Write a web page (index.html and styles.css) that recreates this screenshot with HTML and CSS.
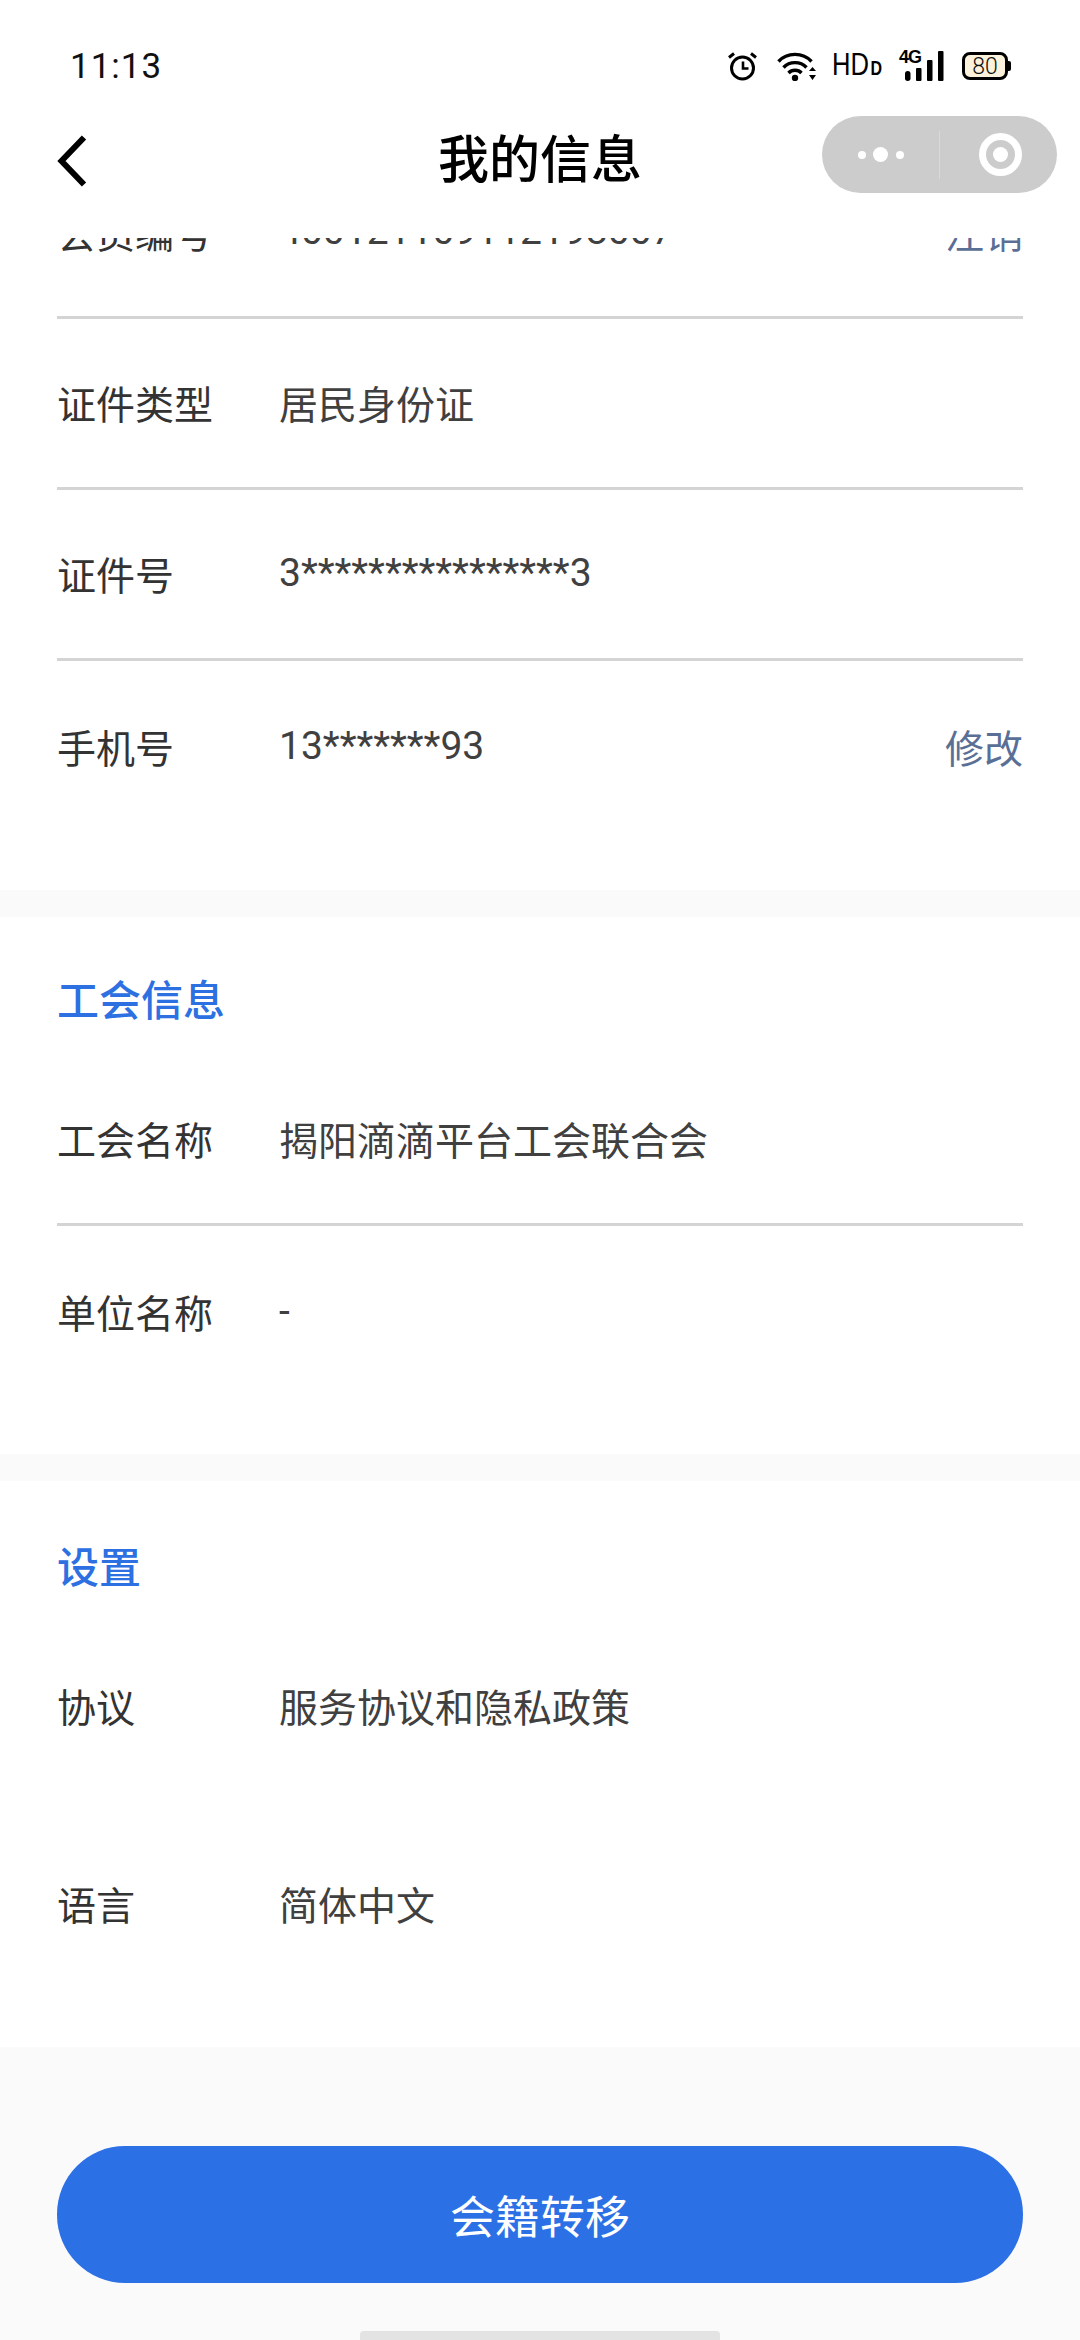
FILE: index.html
```html
<!DOCTYPE html>
<html lang="zh">
<head>
<meta charset="utf-8">
<title>我的信息</title>
<link rel="stylesheet" href="styles.css">
</head>
<body>
<div class="page">
  <header class="top">
    <div class="status">
      <span class="time">11:13</span>
      <div class="status-icons">
        <svg class="i-alarm" viewBox="0 0 29 30" width="29" height="30"><circle cx="14.5" cy="17" r="11" fill="none" stroke="#000" stroke-width="3"/><path d="M15 10.5V17.5H20.5" fill="none" stroke="#000" stroke-width="2.6"/><path d="M1 6.5L6 2.5M28 6.5L23 2.5" stroke="#000" stroke-width="3"/></svg>
        <svg class="i-wifi" viewBox="0 0 39 30" width="39" height="30"><path d="M1.5 10.5C10 1 26 1 34.5 10.5M6.5 16.5C12.5 10 23.5 10 29.5 16.5M11.5 22C15 18.3 21 18.3 24.5 22" fill="none" stroke="#000" stroke-width="3.4"/><circle cx="18" cy="27" r="3.2" fill="#000"/><path d="M32 20l3.5-4 3.5 4zM32 24l3.5 5 3.5-5z" fill="#000"/></svg>
        <span class="hd">HD<small class="hd-small">D</small></span>
        <span class="net">
          <span class="net-4g">4G</span>
          <svg class="net-bars" viewBox="0 0 45 30" width="45" height="30"><rect x="6" y="20" width="5.5" height="10" rx="2.7"/><rect x="17" y="17" width="5.5" height="13" rx="1"/><rect x="28" y="9" width="5.5" height="21" rx="1"/><rect x="39" y="0" width="5.5" height="30" rx="1"/></svg>
        </span>
        <span class="battery"><span class="battery-level">80</span></span>
      </div>
    </div>
    <div class="nav">
      <svg class="back" viewBox="0 0 30 52" width="30" height="52"><path d="M27 2.5L4.5 26L27 49.5" fill="none" stroke="#000" stroke-width="6"/></svg>
      <h1 class="title">我的信息</h1>
      <div class="capsule">
        <div class="capsule-part"><span class="dot"></span><span class="dot dot-big"></span><span class="dot"></span></div>
        <span class="capsule-sep"></span>
        <div class="capsule-part"><span class="target"><span class="target-in"></span></span></div>
      </div>
    </div>
  </header>
  <main class="scroll">
    <div class="content">
      <section class="card card-first">
        <div class="row"><span class="label">会员编号</span><span class="value">400121109112198007</span><span class="action">注销</span></div>
        <div class="row"><span class="label">证件类型</span><span class="value">居民身份证</span></div>
        <div class="row"><span class="label">证件号</span><span class="value">3****************3</span></div>
        <div class="row row-last"><span class="label">手机号</span><span class="value">13*******93</span><span class="action">修改</span></div>
      </section>
      <section class="card">
        <h2 class="heading heading-union">工会信息</h2>
        <div class="row"><span class="label">工会名称</span><span class="value">揭阳滴滴平台工会联合会</span></div>
        <div class="row row-last"><span class="label">单位名称</span><span class="value">-</span></div>
      </section>
      <section class="card card-settings">
        <h2 class="heading heading-settings">设置</h2>
        <div class="row row-plain"><span class="label">协议</span><span class="value">服务协议和隐私政策</span></div>
        <div class="row row-plain"><span class="label">语言</span><span class="value">简体中文</span></div>
      </section>
    </div>
  </main>
  <footer class="foot">
    <button class="cta">会籍转移</button>
    <span class="home"></span>
  </footer>
</div>
</body>
</html>
```
FILE: styles.css
```css
* { box-sizing: border-box; margin: 0; padding: 0; }
html, body { width: 1080px; height: 2340px; overflow: hidden; background: #fff; }
body { font-family: Roboto, "Noto Sans CJK SC", sans-serif; color: #333; }
.page { display: flex; flex-direction: column; height: 2340px; background: #fafafa; }
.top { height: 238px; background: #fff; flex: none; }
.status { height: 116px; padding: 16px 69px 0 70px; display: flex; justify-content: space-between; align-items: center; }
.time { font-family: Roboto, sans-serif; font-size: 35px; color: #111; letter-spacing: 1px; }
.status-icons { display: flex; align-items: center; }
.i-wifi { margin-left: 20px; }
.hd { margin-left: 16px; width: 48px; font-family: "Liberation Sans", sans-serif; font-size: 32px; line-height: 30px; color: #000; white-space: nowrap; transform: scaleX(.8); transform-origin: left center; }
.hd-small { font-size: 20px; font-weight: 700; margin-left: 2px; }
.net { margin-left: 19px; position: relative; display: block; width: 45px; height: 30px; }
.net-bars { display: block; }
.net-4g { position: absolute; left: 0; top: -3px; font-family: "Liberation Sans", sans-serif; font-size: 18px; font-weight: 700; line-height: 18px; color: #000; letter-spacing: -1px; background: #fff; padding-right: 2px; }
.battery { margin-left: 18px; margin-right: 3px; width: 46px; height: 28px; border: 3px solid #000; border-radius: 8px; background: #fdf3dc; display: flex; align-items: center; justify-content: center; position: relative; }
.battery::after { content: ""; position: absolute; right: -6px; top: 6px; width: 3px; height: 10px; background: #000; border-radius: 0 2px 2px 0; }
.battery-level { font-size: 23px; font-weight: 300; color: #111; }
.nav { height: 88px; display: grid; grid-template-columns: 1fr auto 1fr; align-items: center; }
.back { margin-left: 57px; margin-top: 2px; }
.title { font-family: "Noto Sans CJK SC", sans-serif; font-size: 51px; font-weight: 500; color: #000; margin-top: -8px; }
.capsule { justify-self: end; margin-right: 23px; margin-top: -11px; width: 235px; height: 77px; background: #ccc; border-radius: 39px; display: flex; align-items: center; }
.capsule-part { flex: 1; display: flex; align-items: center; justify-content: center; gap: 7.5px; }
.capsule-sep { width: 1px; height: 48px; background: #d9d9d9; }
.dot { width: 8px; height: 8px; border-radius: 50%; background: #fff; }
.dot-big { width: 15px; height: 15px; }
.target { margin-left: 3px; width: 43px; height: 43px; border: 7px solid #fff; border-radius: 50%; display: flex; align-items: center; justify-content: center; }
.target-in { width: 15px; height: 15px; border-radius: 50%; background: #fff; }
.scroll { height: 1809px; flex: none; overflow: hidden; }
.content { margin-top: -90px; display: flex; flex-direction: column; gap: 27px; }
.card { background: #fff; padding: 0 57px 57px; }
.card-first { padding-bottom: 58px; }
.card-settings { padding-bottom: 45px; }
.heading { font-family: "Noto Sans CJK SC", sans-serif; font-size: 42px; line-height: 60px; font-weight: 500; color: #2d70e2; }
.heading-union { padding: 51px 0 27px; }
.heading-settings { padding: 54px 0 11px; }
.row { height: 171px; padding-bottom: 3px; display: flex; align-items: center; border-bottom: 3px solid #d4d4d4; font-size: 39px; }
.row-last { border-bottom: 0; padding-bottom: 2px; }
.row-plain { border-bottom: 0; padding-bottom: 0; height: 198px; }
.label { width: 222px; flex: none; font-family: "Noto Sans CJK SC", sans-serif; color: #333; }
.value { flex: 1; color: #404040; }
.action { color: #5a6f96; font-family: "Noto Sans CJK SC", sans-serif; }
.foot { flex: 1; position: relative; padding: 99px 57px 0; }
.cta { display: block; width: 966px; height: 137px; border: 0; border-radius: 68px; background: #2c70e6; color: #fff; font-family: "Noto Sans CJK SC", sans-serif; font-size: 45px; }
.home { position: absolute; left: 360px; bottom: 0; width: 360px; height: 9px; background: #e3e3e3; border-radius: 4px 4px 0 0; }
```
